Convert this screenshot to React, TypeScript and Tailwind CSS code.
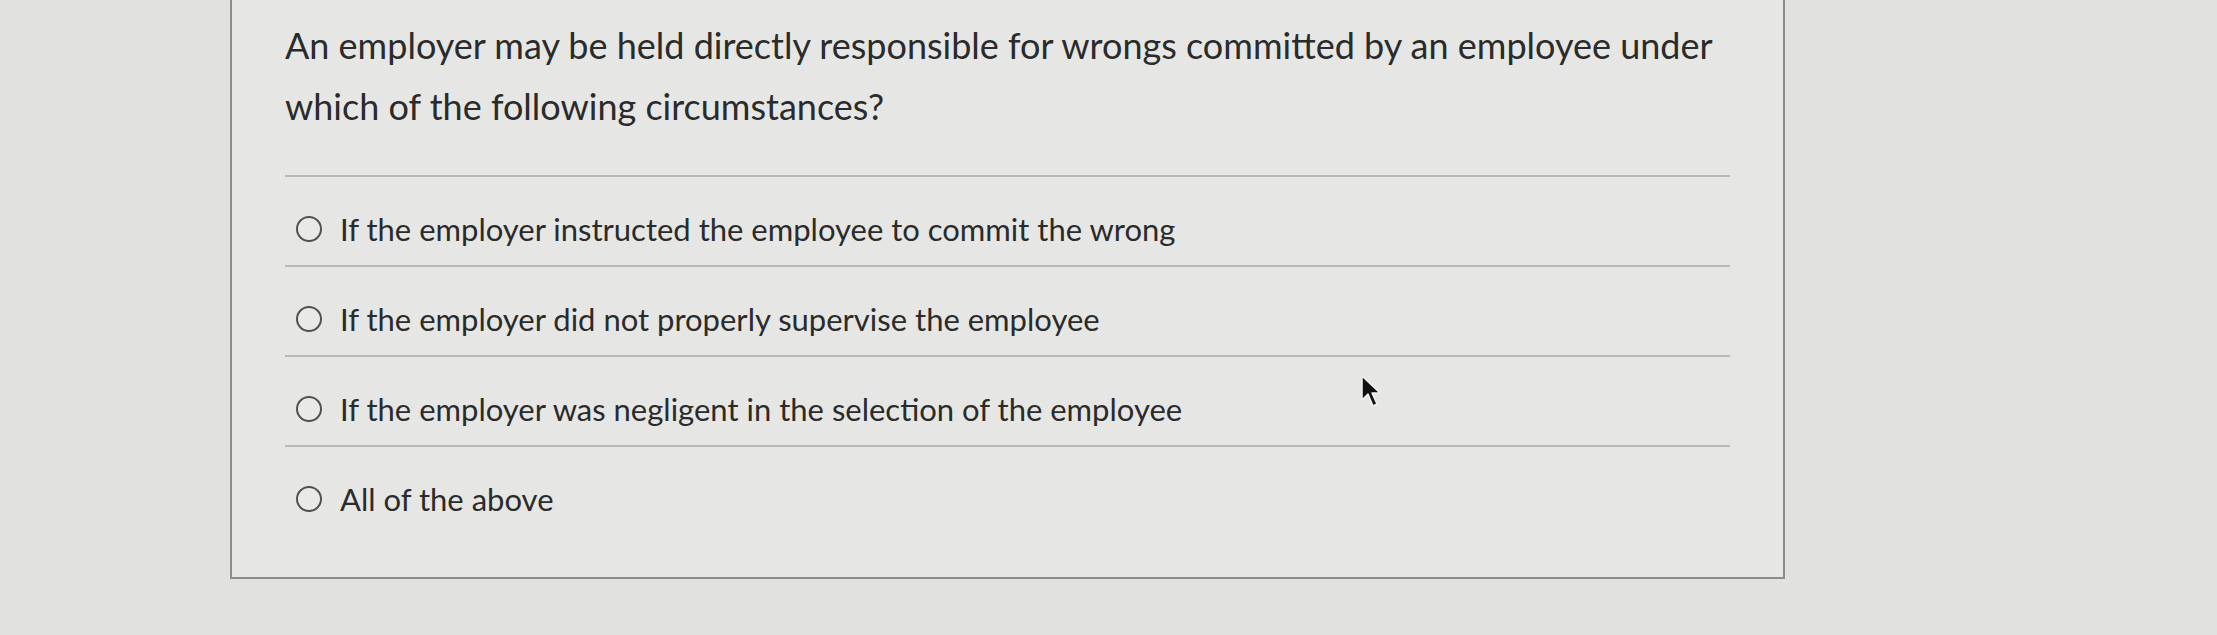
const FONT = { fontFamily: "Lato, 'Open Sans', 'Liberation Sans', sans-serif" };

const OPTIONS = [
  'If the employer instructed the employee to commit the wrong',
  'If the employer did not properly supervise the employee',
  'If the employer was negligent in the selection of the employee',
  'All of the above',
];

function Radio() {
  return <span className="block w-[26px] h-[26px] shrink-0 rounded-full border-2 border-[#505150] bg-[#e9eae8]" />;
}

function Cursor() {
  return (
    <svg width="24" height="36" viewBox="0 0 24 36" className="absolute left-[1360px] top-[374px]">
      <path d="M2 2 L2 26 L8 20 L13 32 L17 30 L12 19 L20 19 Z" fill="#111" stroke="#f2f2f2" strokeWidth="1.5" strokeLinejoin="round" />
    </svg>
  );
}

export default function App() {
  return (
    <div className="relative w-[2217px] h-[635px] overflow-hidden bg-[#e1e2e0]" style={FONT}>
      <div className="ml-[230px] w-[1555px] h-[579px] border-2 border-t-0 border-[#8c8d8b] bg-[#e6e7e5] px-[53px] pt-[15px]">
        <p className="text-[36px] leading-[61px] text-[#2a2b2a]">
          An employer may be held directly responsible for wrongs committed by an employee under which of the
          following circumstances?
        </p>
        <div className="mt-[38px] border-t-2 border-[#b9bab8]">
          {OPTIONS.map((opt, i) => (
            <div
              key={i}
              className={`flex items-center pl-[11px] pt-[36px] pb-[20px] ${
                i < OPTIONS.length - 1 ? 'border-b-2 border-[#b9bab8]' : ''
              }`}
            >
              <Radio />
              <span className="ml-[18px] text-[31px] leading-[32px] text-[#2a2b2a]">{opt}</span>
            </div>
          ))}
        </div>
      </div>
      <Cursor />
    </div>
  );
}
